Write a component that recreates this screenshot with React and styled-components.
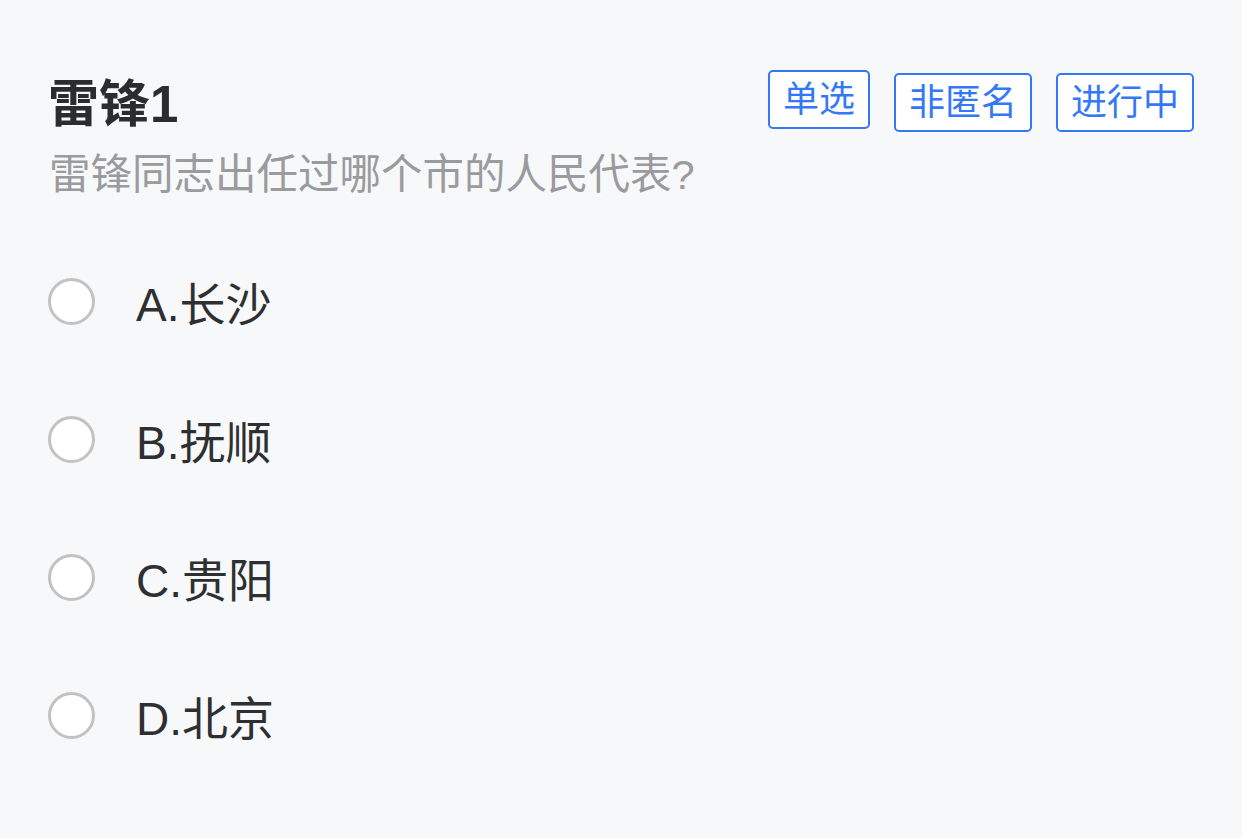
import React from "react";
import styled, { createGlobalStyle } from "styled-components";

const Global = createGlobalStyle`
  html, body { margin: 0; padding: 0; background: #f7f8fa; }
  body { font-family: "Liberation Sans", "Noto Sans CJK SC", sans-serif; }
`;

const Page = styled.div`
  width: 1242px;
  height: 838px;
  box-sizing: border-box;
  padding: 66px 48px 0 48px;
  background: #f7f8fa;
`;

const Header = styled.div`
  display: flex;
  justify-content: space-between;
  align-items: flex-start;
`;

const Title = styled.h1`
  margin: 0;
  font-size: 51px;
  font-weight: 700;
  line-height: 78px;
  color: #2b2c2e;
`;

const Tags = styled.div`
  display: flex;
  align-items: flex-start;
  gap: 24px;
  padding-top: 4px;
`;

const Tag = styled.span`
  display: inline-flex;
  align-items: center;
  justify-content: center;
  box-sizing: border-box;
  height: 59px;
  padding: 0 13px;
  border: 2.5px solid #3478f6;
  border-radius: 5px;
  background: #ffffff;
  color: #3478f6;
  font-size: 36px;
  line-height: 1;
  margin-top: ${(p) => (p.$raised ? "0px" : "3px")};
`;

const Subtitle = styled.p`
  margin: 3px 0 0 1px;
  font-size: 41.5px;
  line-height: 56px;
  color: #9a9b9d;
`;

const Options = styled.div`
  display: flex;
  flex-direction: column;
  margin-top: 29px;
`;

const Option = styled.label`
  display: flex;
  align-items: center;
  height: 138px;
  gap: 41px;
  color: #2e2f31;
  font-size: 46px;
`;

const Radio = styled.span`
  flex: none;
  width: 47px;
  height: 47px;
  box-sizing: border-box;
  border-radius: 50%;
  border: 3px solid #c2c2c2;
  background: #ffffff;
`;

const options = ["A.长沙", "B.抚顺", "C.贵阳", "D.北京"];

export default function App() {
  return (
    <>
      <Global />
      <Page>
        <Header>
          <Title>雷锋1</Title>
          <Tags>
            <Tag $raised>单选</Tag>
            <Tag>非匿名</Tag>
            <Tag>进行中</Tag>
          </Tags>
        </Header>
        <Subtitle>雷锋同志出任过哪个市的人民代表?</Subtitle>
        <Options>
          {options.map((o) => (
            <Option key={o}>
              <Radio />
              <span>{o}</span>
            </Option>
          ))}
        </Options>
      </Page>
    </>
  );
}
